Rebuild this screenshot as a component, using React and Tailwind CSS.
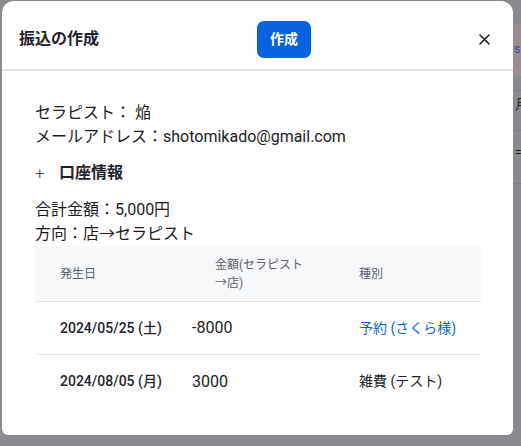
import React from "react";

const font = { fontFamily: '"Roboto", "Noto Sans CJK JP", sans-serif' };

export default function App() {
  return (
    <div
      className="relative w-[521px] h-[446px] overflow-hidden bg-[#888a8e]"
      style={font}
    >
      {/* backdrop page peeking through on the right */}
      <div className="absolute left-[513px] top-[24px] w-[20px] h-[52px] bg-[#9c8b8f]" />
      <div className="absolute left-[514px] top-[40px] text-[12px] text-[#1d4ed8]">s</div>
      <div className="absolute left-[513px] top-[90px] w-[20px] h-px bg-[#7d7f83]" />
      <div className="absolute left-[515px] top-[94px] text-[14px] text-[#222]">月</div>
      <div className="absolute left-[513px] top-[130px] w-[20px] h-px bg-[#7d7f83]" />
      <div className="absolute left-[515px] top-[144px] text-[12px] text-[#222]">=</div>
      <div className="absolute left-[513px] top-[183px] w-[20px] h-px bg-[#7d7f83]" />

      {/* modal */}
      <div className="absolute left-[2px] top-[1px] w-[511px] h-[434px] bg-white rounded-t-[12px] rounded-b-[6px] flex flex-col">
        <div className="flex items-center h-[70px] pt-[8px] pl-[17px] pr-[23px] border-b-2 border-[#e3e3ea]">
          <div className="text-[16px] font-bold text-[#1e232b] w-[238px]">振込の作成</div>
          <button className="w-[54px] h-[37px] rounded-[7px] bg-[#0862de] text-white text-[14px] font-bold">
            作成
          </button>
          <div className="flex-1 flex justify-end">
            <svg width="11" height="11" viewBox="0 0 11 11">
              <path d="M1 1L10 10M10 1L1 10" stroke="#1e232b" strokeWidth="1.6" strokeLinecap="round" />
            </svg>
          </div>
        </div>

        <div className="pl-[33px] pr-[30px] pt-[30px] text-[#1c1c1c]">
          <div className="text-[16px] leading-[24px]">セラピスト： 焔</div>
          <div className="text-[16px] leading-[24px]">メールアドレス：shotomikado@gmail.com</div>
          <div className="flex items-center mt-[12px] h-[24px] text-[16px]">
            <span className="w-[20px] text-[#444] text-[17px] font-light leading-none">+</span>
            <span className="ml-[4px] font-bold text-[#1e232b]">口座情報</span>
          </div>
          <div className="mt-[13px] text-[16px] leading-[24px]">合計金額：5,000円</div>
          <div className="text-[16px] leading-[24px]">方向：店→セラピスト</div>

          <div className="w-[446px]">
            <div className="flex items-center h-[56px] bg-[#f7f8fa] border-b border-[#e2e4ea] text-[12px] text-[#5a606b] leading-[18px]">
              <div className="w-[157px] pl-[25px]">発生日</div>
              <div className="w-[167px] pl-[23px]">
                <div className="w-[96px]">金額(セラピスト→店)</div>
              </div>
              <div className="flex-1">種別</div>
            </div>
            <div className="flex items-center h-[53px] border-b border-[#e2e4ea]">
              <div className="w-[157px] pl-[25px] text-[14px] font-medium text-[#1e232b]">2024/05/25 (土)</div>
              <div className="w-[167px] text-[16px] text-[#1c1c1c]">-8000</div>
              <div className="flex-1 text-[14px] text-[#0a66d9]">予約 (さくら様)</div>
            </div>
            <div className="flex items-center h-[53px]">
              <div className="w-[157px] pl-[25px] text-[14px] font-medium text-[#1e232b]">2024/08/05 (月)</div>
              <div className="w-[167px] text-[16px] text-[#1c1c1c]">3000</div>
              <div className="flex-1 text-[14px] text-[#1e232b]">雑費 (テスト)</div>
            </div>
          </div>
        </div>
      </div>
    </div>
  );
}
